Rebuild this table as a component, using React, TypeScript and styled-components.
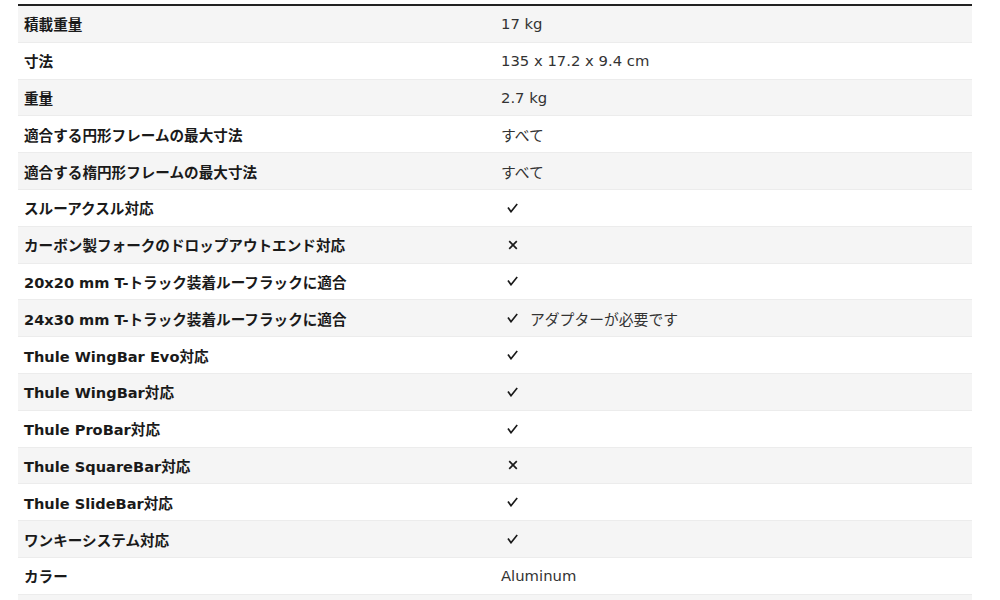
import React from 'react';
import styled, { createGlobalStyle } from 'styled-components';

const GlobalStyle = createGlobalStyle`
  html, body {
    margin: 0;
    padding: 0;
    background: #ffffff;
  }
  body {
    font-family: 'DejaVu Sans', 'Noto Sans CJK JP', sans-serif;
  }
`;

const Page = styled.div`
  padding: 4px 28px 0 18px;
  height: 600px;
  overflow: hidden;
  box-sizing: border-box;
`;

const SpecTable = styled.div`
  border-top: 2px solid #222;
  display: flex;
  flex-direction: column;
`;

const Row = styled.div<{ shaded: boolean }>`
  display: grid;
  grid-template-columns: 1fr 1fr;
  align-items: center;
  height: 35.8px;
  border-bottom: 1px solid #ececec;
  background: ${p => (p.shaded ? '#f5f5f5' : '#ffffff')};
`;

const Label = styled.div`
  padding-left: 6px;
  font-size: 14.6px;
  font-weight: bold;
  color: #1a1a1a;
  white-space: nowrap;
`;

const Value = styled.div`
  padding-left: 6px;
  font-size: 14.8px;
  color: #333;
  display: flex;
  align-items: center;
  gap: 12px;
  white-space: nowrap;
`;

const Mark = styled.span`
  display: inline-flex;
  padding-left: 6px;
  width: 11px;
  justify-content: center;
`;

const Check = () => (
  <Mark>
    <svg width="11" height="10" viewBox="0 0 11 10">
      <path d="M1 4.5 L4 8.7 L10.2 1" fill="none" stroke="#1a1a1a" strokeWidth="1.7" />
    </svg>
  </Mark>
);

const Cross = () => (
  <Mark>
    <svg width="10" height="10" viewBox="0 0 10 10">
      <path d="M1.2 1.2 L8.8 8.8 M8.8 1.2 L1.2 8.8" fill="none" stroke="#1a1a1a" strokeWidth="1.7" />
    </svg>
  </Mark>
);

type Spec = { label: string; value?: string; mark?: 'yes' | 'no'; note?: string };

const specs: Spec[] = [
  { label: '積載重量', value: '17 kg' },
  { label: '寸法', value: '135 x 17.2 x 9.4 cm' },
  { label: '重量', value: '2.7 kg' },
  { label: '適合する円形フレームの最大寸法', value: 'すべて' },
  { label: '適合する楕円形フレームの最大寸法', value: 'すべて' },
  { label: 'スルーアクスル対応', mark: 'yes' },
  { label: 'カーボン製フォークのドロップアウトエンド対応', mark: 'no' },
  { label: '20x20 mm T-トラック装着ルーフラックに適合', mark: 'yes' },
  { label: '24x30 mm T-トラック装着ルーフラックに適合', mark: 'yes', note: 'アダプターが必要です' },
  { label: 'Thule WingBar Evo対応', mark: 'yes' },
  { label: 'Thule WingBar対応', mark: 'yes' },
  { label: 'Thule ProBar対応', mark: 'yes' },
  { label: 'Thule SquareBar対応', mark: 'no' },
  { label: 'Thule SlideBar対応', mark: 'yes' },
  { label: 'ワンキーシステム対応', mark: 'yes' },
  { label: 'カラー', value: 'Aluminum' },
  { label: '', value: '' },
];

export default function App() {
  return (
    <>
      <GlobalStyle />
      <Page>
        <SpecTable>
          {specs.map((s, i) => (
            <Row key={i} shaded={i % 2 === 0}>
              <Label>{s.label}</Label>
              <Value>
                {s.mark === 'yes' && <Check />}
                {s.mark === 'no' && <Cross />}
                {s.value}
                {s.note && <span>{s.note}</span>}
              </Value>
            </Row>
          ))}
        </SpecTable>
      </Page>
    </>
  );
}
